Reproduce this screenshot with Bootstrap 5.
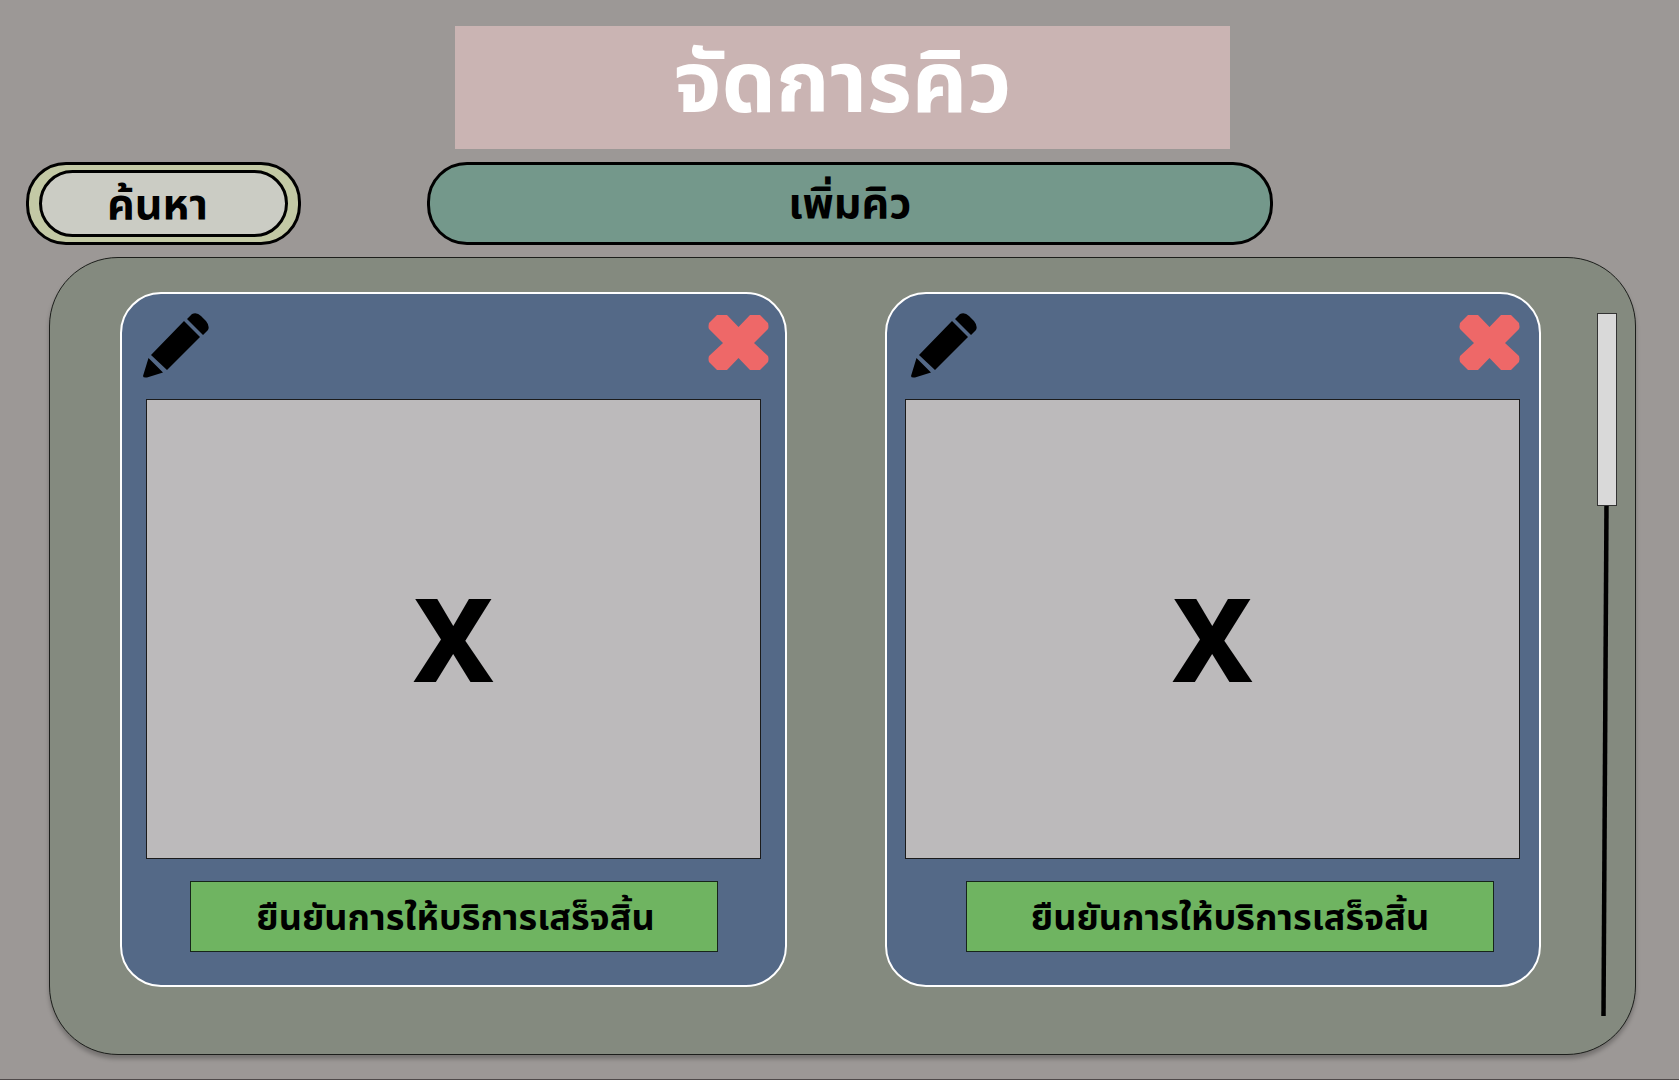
<!DOCTYPE html>
<html lang="th">
<head>
<meta charset="utf-8">
<meta name="viewport" content="width=device-width, initial-scale=1">
<title>จัดการคิว</title>
<link href="https://cdn.jsdelivr.net/npm/bootstrap@5.3.0/dist/css/bootstrap.min.css" rel="stylesheet">
<style>
body { background: #9c9896; color: #000; font-family: "Noto Sans", "Noto Sans Thai", sans-serif; font-weight: 700; }
.page { min-height: 100vh; padding-top: 26px; border-bottom: 1px solid #4f4a4a; }
.title-row { padding: 0 43px 0 49px; }
.page-title { width: 775px; max-width: 100%; height: 123px; background: #cab4b3; color: #fff; font-size: 86px; line-height: 106px; font-weight: 700; }
.toolbar { padding: 0 24.2% 0 26px; gap: 126px; margin-top: 13px; }
.pill { height: 83px; border: 3px solid #000; border-radius: 40px; font-size: 43px; line-height: 60px; font-weight: 700; }
.search-shell { width: 275px; background: #c3c9a5; padding: 5px 10px; }
.search-btn { height: 67px; border: 3px solid #000; border-radius: 34px; background: #cbccc4; padding: 0 12px 6px 0; font: inherit; }
.add-btn { background: #74988b; padding: 0 0 4px; }
.queue-panel { margin: 12px 43px 0 49px; height: 798px; padding: 34px 18px 36px 70px; background: #848a7f; border: 1px solid #1c1e1b; border-radius: 69px; box-shadow: 0 4px 4px rgba(0, 0, 0, .25); }
.queue-grid { display: grid; grid-template-columns: 667fr 656fr; column-gap: 98px; }
.queue-card { height: 695px; background: #546987; border: 2px solid #fff; border-radius: 41px; padding: 19px 24px 0; }
.queue-card.second { padding: 19px 19px 0 18px; }
.card-tools { height: 86px; }
.icon-btn { border: 0; background: none; padding: 0; line-height: 0; }
.first .edit-btn { margin-left: -3px; }
.second .edit-btn { margin-left: 6px; }
.first .remove-btn { margin-right: -8px; }
.remove-btn { margin-top: 2px; }
.photo { height: 460px; background: #bcbabb; border: 1px solid #1b1b1b; font-weight: 800; font-size: 116px; line-height: 160px; padding-top: 15px; }
.done-btn { display: block; height: 71px; width: 528px; max-width: 86%; margin: 22px 0 0 44px; background: #6fb461; border: 1px solid #16241a; font-size: 36px; line-height: 54px; font-weight: 700; padding: 0; }
.first .done-btn { padding-left: 3px; }
.second .done-btn { margin-left: 61px; }
.scroll-rail { width: 20px; margin: 21px 0 0 56px; }
.scroll-rail svg { display: block; }
</style>
</head>
<body>
<div class="page">
  <header class="title-row">
    <h1 class="page-title mx-auto mb-0 text-center">จัดการคิว</h1>
  </header>
  <div class="toolbar d-flex">
    <div class="pill search-shell flex-shrink-0"><button type="button" class="search-btn w-100">ค้นหา</button></div>
    <button type="button" class="pill add-btn flex-grow-1">เพิ่มคิว</button>
  </div>
  <main class="queue-panel d-flex">
    <div class="queue-grid flex-grow-1">
      <article class="queue-card first">
        <div class="card-tools d-flex justify-content-between align-items-start">
          <button type="button" class="icon-btn edit-btn" aria-label="แก้ไข"><svg width="66" height="66" viewBox="0 0 66 66"><path d="M44 6 49 1Q54-1 58 3L63 8Q67 13 65 17L60 22ZM41 8 57 24 24 57 8 42ZM5.500 45 20 59.500 4 64.500Q0 65 0 63Z"/></svg></button>
          <button type="button" class="icon-btn remove-btn" aria-label="ลบ"><svg width="61" height="56" viewBox="0 0 61 56"><path fill="#ee6868" d="M9 0H19L30.500 12 42 0H52L60 8Q61 12 60 14L46 28 60 41Q61 44 60 47L52 55H42L30.500 43 19 55H9L1 47Q0 44 1 41L15 28 1 14Q0 12 1 8Z"/></svg></button>
        </div>
        <div class="photo d-flex align-items-center justify-content-center">X</div>
        <button type="button" class="done-btn">ยืนยันการให้บริการเสร็จสิ้น</button>
      </article>
      <article class="queue-card second">
        <div class="card-tools d-flex justify-content-between align-items-start">
          <button type="button" class="icon-btn edit-btn" aria-label="แก้ไข"><svg width="66" height="66" viewBox="0 0 66 66"><path d="M44 6 49 1Q54-1 58 3L63 8Q67 13 65 17L60 22ZM41 8 57 24 24 57 8 42ZM5.500 45 20 59.500 4 64.500Q0 65 0 63Z"/></svg></button>
          <button type="button" class="icon-btn remove-btn" aria-label="ลบ"><svg width="61" height="56" viewBox="0 0 61 56"><path fill="#ee6868" d="M9 0H19L30.500 12 42 0H52L60 8Q61 12 60 14L46 28 60 41Q61 44 60 47L52 55H42L30.500 43 19 55H9L1 47Q0 44 1 41L15 28 1 14Q0 12 1 8Z"/></svg></button>
        </div>
        <div class="photo d-flex align-items-center justify-content-center">X</div>
        <button type="button" class="done-btn">ยืนยันการให้บริการเสร็จสิ้น</button>
      </article>
    </div>
    <div class="scroll-rail flex-shrink-0">
      <svg width="20" height="704" viewBox="0 0 20 704"><path d="M9.500 190 6.500 703" stroke="#000" stroke-width="4.500"/><rect x=".5" y=".5" width="19" height="192" fill="#d9d9d9" stroke="#333"/></svg>
    </div>
  </main>
</div>
<script src="https://cdn.jsdelivr.net/npm/bootstrap@5.3.0/dist/js/bootstrap.bundle.min.js"></script>
</body>
</html>
